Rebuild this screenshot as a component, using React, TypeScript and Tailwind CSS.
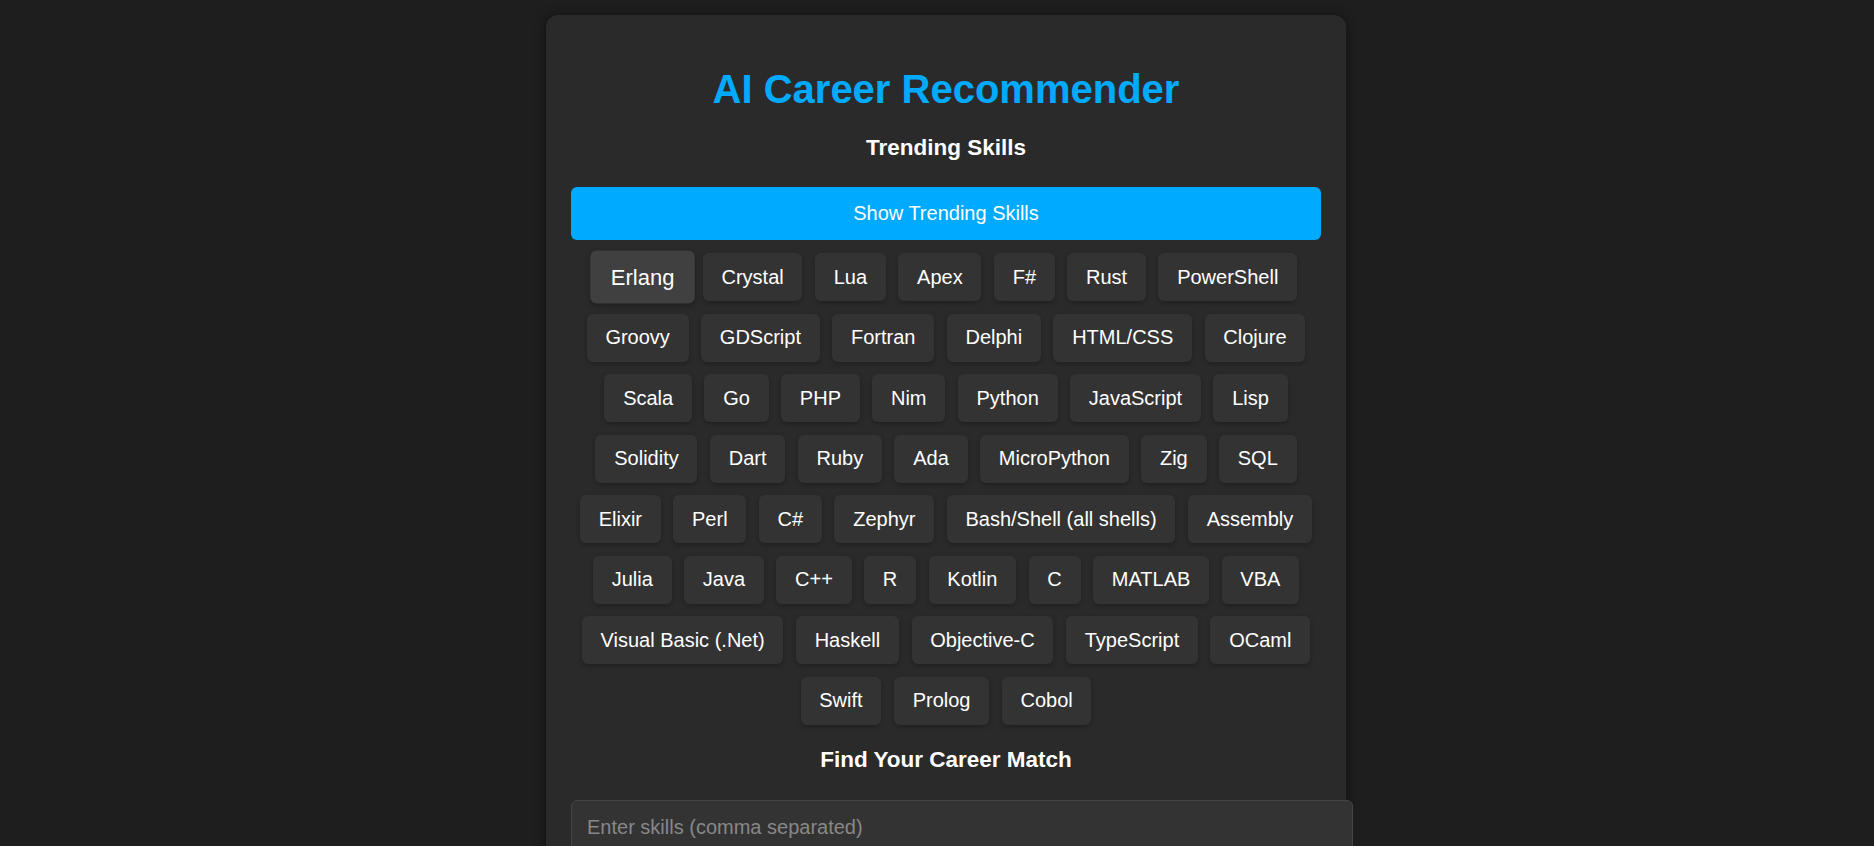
import React, { useState } from 'react';

const skills = [
  'Erlang', 'Crystal', 'Lua', 'Apex', 'F#', 'Rust', 'PowerShell',
  'Groovy', 'GDScript', 'Fortran', 'Delphi', 'HTML/CSS', 'Clojure',
  'Scala', 'Go', 'PHP', 'Nim', 'Python', 'JavaScript', 'Lisp',
  'Solidity', 'Dart', 'Ruby', 'Ada', 'MicroPython', 'Zig', 'SQL',
  'Elixir', 'Perl', 'C#', 'Zephyr', 'Bash/Shell (all shells)', 'Assembly',
  'Julia', 'Java', 'C++', 'R', 'Kotlin', 'C', 'MATLAB', 'VBA',
  'Visual Basic (.Net)', 'Haskell', 'Objective-C', 'TypeScript', 'OCaml',
  'Swift', 'Prolog', 'Cobol',
];

const App = () => {
  const [hovered, setHovered] = useState<string | null>('Erlang');
  const [input, setInput] = useState('');

  return (
    <div className="min-h-screen w-full bg-[#1e1e1e] pt-[15px] pb-10 pl-[18px] font-['Liberation_Sans',Arial,sans-serif] text-white">
      {/* card */}
      <div className="mx-auto w-[800px] rounded-[12px] bg-[#2a2a2a] px-[25px] pt-[25px] pb-[30px] shadow-[0_0_12px_rgba(0,0,0,0.45)]">
        <h1 className="mt-[26px] text-center text-[40px] font-bold leading-[46px] text-[#00aaff]">AI Career Recommender</h1>

        <h3 className="mt-[23px] text-center text-[22.5px] font-bold leading-[26px] text-white">Trending Skills</h3>

        <button className="mt-[26px] block w-full rounded-[6px] bg-[#00aaff] py-[15px] text-center text-[20px] leading-[23px] text-white">
          Show Trending Skills
        </button>

        <div className="mt-[7px] flex flex-wrap justify-center">
          {skills.map((s) => (
            <span
              key={s}
              onMouseEnter={() => setHovered(s)}
              onMouseLeave={() => setHovered(null)}
              className={`m-[6.25px] cursor-pointer rounded-[6px] px-[18.75px] py-[12.5px] text-[20px] leading-[23px] text-white shadow-[0_2px_5px_rgba(0,0,0,0.25)] transition-transform ${
                hovered === s ? 'scale-110 bg-[#404040]' : 'bg-[#333333]'
              }`}
            >
              {s}
            </span>
          ))}
        </div>

        <h3 className="mt-[16px] text-center text-[22.5px] font-bold leading-[26px] text-white">Find Your Career Match</h3>

        <input
          value={input}
          onChange={(e) => setInput(e.target.value)}
          placeholder="Enter skills (comma separated)"
          className="mt-[27px] box-content block w-full rounded-[6px] border border-[#444] bg-[#333333] px-[15px] py-[15px] text-[20px] leading-[23px] text-white outline-none placeholder:text-[#888]"
        />

        <button className="mt-[20px] block w-full rounded-[6px] bg-[#00aaff] py-[15px] text-center text-[20px] leading-[23px] text-white">
          Find Careers
        </button>
      </div>
    </div>
  );
};

export default App;
